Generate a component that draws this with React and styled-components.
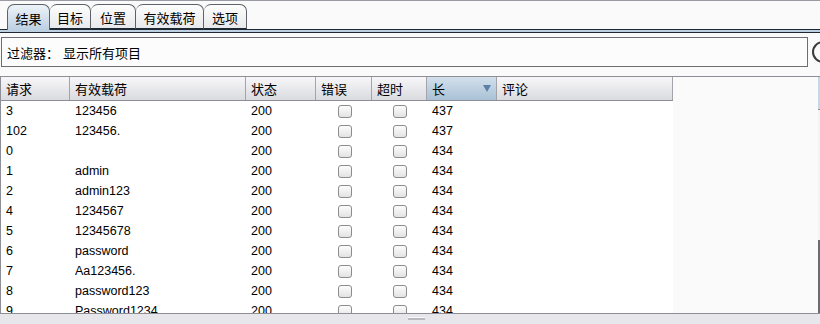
import React from "react";
import styled, { createGlobalStyle } from "styled-components";

const GlobalStyle = createGlobalStyle`
  html, body { margin: 0; padding: 0; overflow: hidden; background: #fafafa; }
  body { font-family: "Liberation Sans", Arial, "Noto Sans CJK SC", sans-serif; color: #000; }
`;

const Page = styled.div`
  width: 836px;
  height: 324px;
  display: flex;
  flex-direction: column;
  background: #fafafa;
`;

const TabBar = styled.div`
  display: flex;
  align-items: flex-end;
  padding-left: 7px;
  border-top: 1px solid #9a9aa3;
  border-bottom: 1px solid #1e2833;
  box-sizing: border-box;
  height: 30px;
`;

const Tab = styled.div`
  width: ${(p) => p.$w}px;
  height: ${(p) => (p.$active ? 26 : 25)}px;
  margin-bottom: ${(p) => (p.$active ? -1 : 0)}px;
  box-sizing: border-box;
  border: 1px solid #5d6269;
  border-bottom: ${(p) => (p.$active ? "none" : "1px solid #1e2833")};
  border-left: ${(p) => (p.$first ? "1px solid #5d6269" : "none")};
  border-radius: 7px 7px 0 0;
  background: ${(p) =>
    p.$active
      ? "linear-gradient(#eef3f8, #bcd0e2)"
      : "linear-gradient(#fdfdfd, #e8e9ec)"};
  display: flex;
  align-items: center;
  justify-content: center;
  font-size: 13px;
  padding-top: 1px;
`;

const TabStrip = styled.div`
  height: 2px;
  background: #bcd0e2;
  border-bottom: 1px solid #1e2833;
`;

const FilterRow = styled.div`
  display: flex;
  align-items: center;
  gap: 4px;
  margin-top: 4px;
  padding-left: 1px;
`;

const FilterBox = styled.div`
  width: 807px;
  height: 30px;
  box-sizing: border-box;
  border: 1px solid #6e6e72;
  background: #fcfcfc;
  display: flex;
  align-items: center;
  padding-left: 5px;
  font-size: 13px;
  gap: 4px;
`;

const HelpCircle = styled.div`
  width: 22px;
  height: 22px;
  box-sizing: border-box;
  border: 2px solid #3a3a3a;
  border-radius: 50%;
  background: #fafafa;
  flex-shrink: 0;
`;

const TableArea = styled.div`
  margin-top: 9px;
  display: flex;
  border-top: 1px solid #8e8e96;
  border-bottom: 1px solid #8e8e96;
  height: 238px;
  box-sizing: border-box;
`;

const Viewport = styled.div`
  width: 818px;
  flex-shrink: 0;
  border-left: 1px solid #8e8e96;
  box-sizing: border-box;
  overflow: hidden;
  background: #fafafa;
`;

const cols = "69px 176px 70px 56px 55px 70px 176px";

const HeaderRow = styled.div`
  display: grid;
  grid-template-columns: ${cols};
  width: 672px;
  height: 24px;
  box-sizing: border-box;
  border-bottom: 1px solid #8e8e96;
`;

const HeadCell = styled.div`
  display: flex;
  align-items: center;
  justify-content: space-between;
  padding: 0 5px 0 5px;
  border-right: 1px solid #a2a4aa;
  font-size: 13px;
  background: ${(p) =>
    p.$sorted
      ? "linear-gradient(#d3e0eb, #a9c1d6)"
      : "linear-gradient(#f7f7f9, #dadbe0)"};
`;

const SortArrow = styled.span`
  width: 0;
  height: 0;
  border-left: 4px solid transparent;
  border-right: 4px solid transparent;
  border-top: 7px solid #5b80a8;
`;

const Row = styled.div`
  display: grid;
  grid-template-columns: ${cols};
  width: 672px;
  height: 20px;
  background: #fff;
`;

const Cell = styled.div`
  display: flex;
  align-items: center;
  justify-content: ${(p) => (p.$center ? "center" : "flex-start")};
  padding-left: ${(p) => (p.$center ? 0 : 5)}px;
  font-size: 12.5px;
  white-space: nowrap;
`;

const Check = styled.div`
  width: 14px;
  height: 13px;
  box-sizing: border-box;
  border: 1px solid #8c8c8c;
  border-radius: 3px;
  background: linear-gradient(#fdfdfd, #e2e2e4);
  margin-left: ${(p) => p.$off || 0}px;
`;

const ScrollBar = styled.div`
  width: 16px;
  display: flex;
  flex-direction: column;
  background: #f0f0f2;
`;

const ScrollArrow = styled.div`
  height: 32px;
  background: linear-gradient(90deg, #c9d8e6, #b3c8da);
  border-bottom: 1px solid #8e8e96;
`;

const ScrollTrack = styled.div`
  flex: 1;
  display: flex;
  flex-direction: column;
  padding-top: 130px;
  background: #f4f4f6;
`;

const ScrollThumb = styled.div`
  flex: 1;
  background: #6a6a70;
`;

const BottomBar = styled.div`
  flex: 1;
  background: #e6e6eb;
  display: flex;
  justify-content: flex-start;
  padding-left: 408px;
  padding-top: 3px;
`;

const Grip = styled.div`
  width: 17px;
  height: 2px;
  background: #b9b9c0;
  border-top: 1px solid #f8f8fa;
`;

const rows = [
  ["3", "123456", "200", "437"],
  ["102", "123456.", "200", "437"],
  ["0", "", "200", "434"],
  ["1", "admin", "200", "434"],
  ["2", "admin123", "200", "434"],
  ["4", "1234567", "200", "434"],
  ["5", "12345678", "200", "434"],
  ["6", "password", "200", "434"],
  ["7", "Aa123456.", "200", "434"],
  ["8", "password123", "200", "434"],
  ["9", "Password1234", "200", "434"],
];

const tabs = [
  ["结果", 43],
  ["目标", 41],
  ["位置", 45],
  ["有效载荷", 68],
  ["选项", 43],
];

const headers = ["请求", "有效载荷", "状态", "错误", "超时", "长", "评论"];

export default function App() {
  return (
    <>
      <GlobalStyle />
      <Page>
        <TabBar>
          {tabs.map(([t, w], i) => (
            <Tab key={t} $w={w} $active={i === 0} $first={i === 0}>
              {t}
            </Tab>
          ))}
        </TabBar>
        <TabStrip />
        <FilterRow>
          <FilterBox>
            <span>过滤器：</span>
            <span>显示所有项目</span>
          </FilterBox>
          <HelpCircle />
        </FilterRow>
        <TableArea>
          <Viewport>
            <HeaderRow>
              {headers.map((h, i) => (
                <HeadCell key={h} $sorted={i === 5}>
                  <span>{h}</span>
                  {i === 5 && <SortArrow />}
                </HeadCell>
              ))}
            </HeaderRow>
            {rows.map((r) => (
              <Row key={r[0]}>
                <Cell>{r[0]}</Cell>
                <Cell>{r[1]}</Cell>
                <Cell>{r[2]}</Cell>
                <Cell $center>
                  <Check $off={1} />
                </Cell>
                <Cell $center>
                  <Check />
                </Cell>
                <Cell>{r[3]}</Cell>
                <Cell />
              </Row>
            ))}
          </Viewport>
          <ScrollBar>
            <ScrollArrow />
            <ScrollTrack>
              <ScrollThumb />
            </ScrollTrack>
          </ScrollBar>
        </TableArea>
        <BottomBar>
          <Grip />
        </BottomBar>
      </Page>
    </>
  );
}
